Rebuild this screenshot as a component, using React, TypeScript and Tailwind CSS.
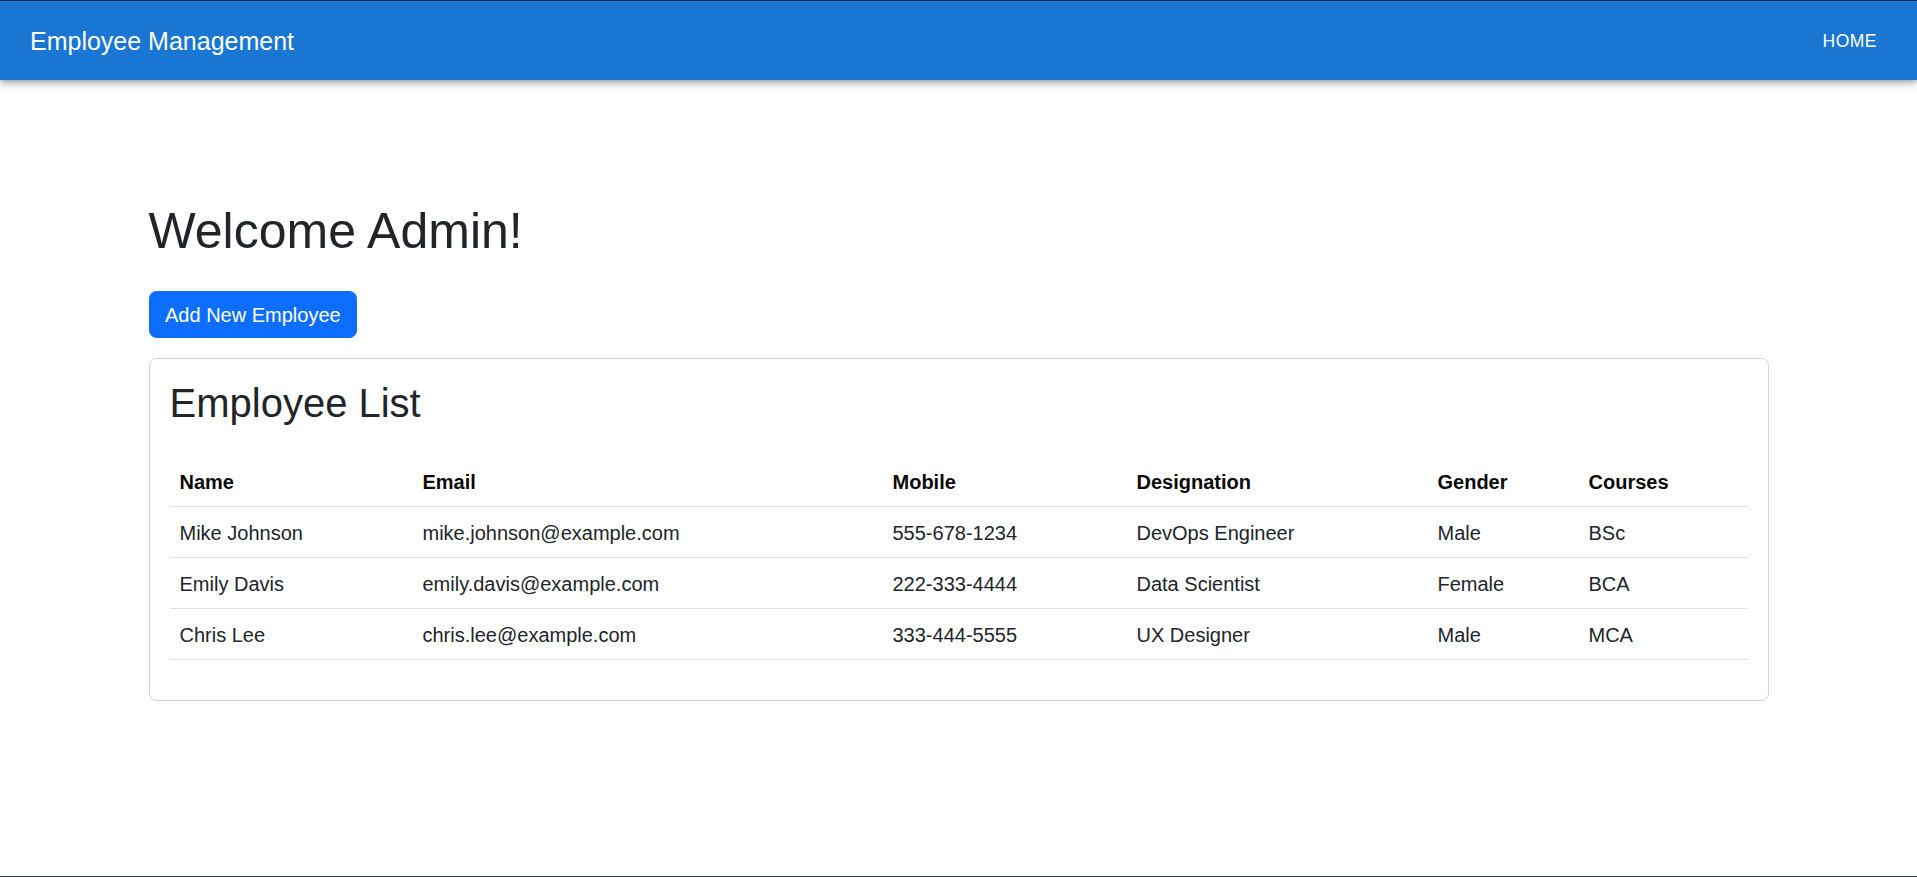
import React from "react";

type Employee = {
  name: string;
  email: string;
  mobile: string;
  designation: string;
  gender: string;
  course: string;
};

const employees: Employee[] = [
  { name: "Mike Johnson", email: "mike.johnson@example.com", mobile: "555-678-1234", designation: "DevOps Engineer", gender: "Male", course: "BSc" },
  { name: "Emily Davis", email: "emily.davis@example.com", mobile: "222-333-4444", designation: "Data Scientist", gender: "Female", course: "BCA" },
  { name: "Chris Lee", email: "chris.lee@example.com", mobile: "333-444-5555", designation: "UX Designer", gender: "Male", course: "MCA" },
];

const columns = [
  { label: "Name", w: "w-[243px]" },
  { label: "Email", w: "w-[470px]" },
  { label: "Mobile", w: "w-[244px]" },
  { label: "Designation", w: "w-[301px]" },
  { label: "Gender", w: "w-[151px]" },
  { label: "Courses", w: "w-[169px]" },
];

export default function App() {
  return (
    <div className="flex min-h-screen flex-col border-b border-[#37474f] bg-white font-['Liberation_Sans',Arial,sans-serif] text-[#212529]">
      {/* top app bar */}
      <header className="relative z-10 flex h-[80px] items-center justify-between border-t border-[#0f2a4f] bg-[#1976d2] pl-[30px] pr-[30px] text-white shadow-[0_2px_5px_-1px_rgba(0,0,0,0.2),0_5px_6px_0_rgba(0,0,0,0.14),0_1px_12px_0_rgba(0,0,0,0.12)]">
        <h6 className="text-[25px] leading-[40px] font-normal">Employee Management</h6>
        <button className="rounded px-[10px] py-[7px] text-[17.5px] leading-[30px] font-normal tracking-[0.5px] uppercase hover:bg-white/10">
          Home
        </button>
      </header>

      <main className="mx-auto w-[1650px] px-[15px]">
        <h1 className="mt-[121px] mb-[30px] text-[50px] leading-[60px] font-normal">Welcome Admin!</h1>

        <button className="rounded-[7.5px] border border-[#0d6efd] bg-[#0d6efd] px-[15.5px] py-[7.5px] text-[20px] leading-[30px] text-white hover:bg-[#0b5ed7]">
          Add New Employee
        </button>

        <div className="mt-[20px] rounded-[7.5px] border border-[#d3d3d4] p-[20px]">
          <h2 className="mb-[29px] text-[40px] leading-[48px] font-normal">Employee List</h2>
          <table className="mb-[20px] w-full table-fixed border-collapse text-left text-[20px] leading-[30px]">
            <colgroup>
              {columns.map((c) => (
                <col key={c.label} className={c.w} />
              ))}
            </colgroup>
            <thead>
              <tr>
                {columns.map((c) => (
                  <th key={c.label} className="border-b border-[#dee2e6] px-[10px] pt-[10.5px] pb-[9.5px] font-bold text-[#0a0a0a]">
                    {c.label}
                  </th>
                ))}
              </tr>
            </thead>
            <tbody>
              {employees.map((e) => (
                <tr key={e.email}>
                  <td className="border-b border-[#dee2e6] px-[10px] pt-[10.5px] pb-[9.5px]">{e.name}</td>
                  <td className="border-b border-[#dee2e6] px-[10px] pt-[10.5px] pb-[9.5px]">{e.email}</td>
                  <td className="border-b border-[#dee2e6] px-[10px] pt-[10.5px] pb-[9.5px]">{e.mobile}</td>
                  <td className="border-b border-[#dee2e6] px-[10px] pt-[10.5px] pb-[9.5px]">{e.designation}</td>
                  <td className="border-b border-[#dee2e6] px-[10px] pt-[10.5px] pb-[9.5px]">{e.gender}</td>
                  <td className="border-b border-[#dee2e6] px-[10px] pt-[10.5px] pb-[9.5px]">{e.course}</td>
                </tr>
              ))}
            </tbody>
          </table>
        </div>
      </main>
    </div>
  );
}
